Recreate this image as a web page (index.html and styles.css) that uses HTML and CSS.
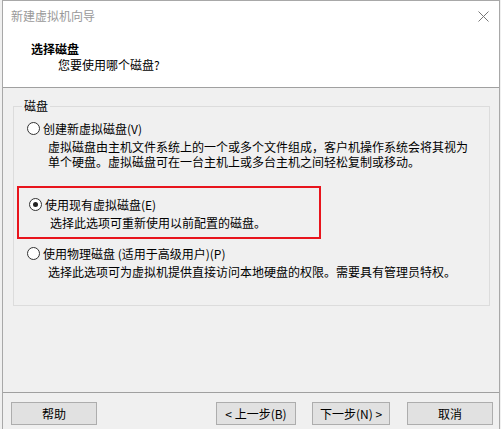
FILE: index.html
```html
<!DOCTYPE html>
<html>
<head>
<meta charset="utf-8">
<link rel="stylesheet" href="styles.css">
</head>
<body>
<div class="window">
  <div class="header">
    <div class="titlebar">
      <span class="title">新建虚拟机向导</span>
      <svg class="close" width="11" height="11" viewBox="0 0 11 11"><path d="M0.5 0.5 L10.5 10.5 M10.5 0.5 L0.5 10.5" stroke="#777" stroke-width="1" fill="none"/></svg>
    </div>
    <div class="head-title">选择磁盘</div>
    <div class="head-sub">您要使用哪个磁盘?</div>
  </div>
  <div class="body">
    <fieldset class="group">
      <legend>磁盘</legend>
      <div class="option opt1">
        <div class="radio-row"><span class="radio"></span><span>创建新虚拟磁盘(V)</span></div>
        <div class="desc">
          <div class="line">虚拟磁盘由主机文件系统上的一个或多个文件组成，客户机操作系统会将其视为</div>
          <div class="line">单个硬盘。虚拟磁盘可在一台主机上或多台主机之间轻松复制或移动。</div>
        </div>
      </div>
      <div class="option opt2">
        <div class="radio-row"><span class="radio checked"></span><span>使用现有虚拟磁盘(E)</span></div>
        <div class="desc"><div class="line">选择此选项可重新使用以前配置的磁盘。</div></div>
      </div>
      <div class="option opt3">
        <div class="radio-row"><span class="radio"></span><span>使用物理磁盘 (适用于高级用户)(P)</span></div>
        <div class="desc"><div class="line">选择此选项可为虚拟机提供直接访问本地硬盘的权限。需要具有管理员特权。</div></div>
      </div>
    </fieldset>
  </div>
  <div class="footer">
    <button class="btn help">帮助</button>
    <div class="spacer"></div>
    <button class="btn prev">&lt; 上一步(B)</button>
    <button class="btn next">下一步(N) &gt;</button>
    <button class="btn cancel">取消</button>
  </div>
</div>
</body>
</html>
```
FILE: styles.css
```css
html, body {
  margin: 0;
  padding: 0;
  background: #f0f0f0;
}
body {
  font-family: "Noto Sans CJK SC", "Microsoft YaHei", sans-serif;
  font-size: 12px;
  color: #000;
}
.window {
  margin-left: 2px;
  width: 498px;
  height: 429px;
  border: 1px solid #a8a8a8;
  border-bottom: none;
  background: #f0f0f0;
  display: flex;
  flex-direction: column;
  box-sizing: border-box;
}
.header {
  background: #fff;
  height: 87px;
  border-bottom: 1px solid #a0a0a0;
  box-sizing: border-box;
  flex: none;
}
.titlebar {
  height: 30px;
  display: flex;
  align-items: center;
  justify-content: space-between;
  padding: 0 10px 0 8px;
}
.title {
  color: #999;
  font-size: 12px;
  line-height: 16px;
}
.head-title {
  font-weight: bold;
  font-size: 12px;
  line-height: 16px;
  margin: 10px 0 0 28px;
}
.head-sub {
  line-height: 16px;
  margin: 0 0 0 55px;
}
.body {
  flex: 1;
  padding: 10px 9px 0 10px;
}
.group {
  margin: 0;
  padding: 5px 10px 0 10px;
  height: 208px;
  box-sizing: border-box;
  border: 1px solid #dcdcdc;
}
.group legend {
  padding: 0 2px;
  margin-left: -2px;
  line-height: 16px;
}
.option {
  padding: 0 0 0 3px;
}
.radio-row {
  display: flex;
  align-items: center;
  gap: 3px;
  height: 18px;
}
.radio {
  width: 11px;
  height: 11px;
  border: 1px solid #333;
  border-radius: 50%;
  background: #fff;
  position: relative;
  flex: none;
}
.radio.checked::after {
  content: "";
  position: absolute;
  left: 3px;
  top: 3px;
  width: 5px;
  height: 5px;
  border-radius: 50%;
  background: #222;
}
.desc {
  margin: 4px 0 0 21px;
}
.line {
  font-family: "Liberation Sans", "Noto Sans CJK SC", sans-serif;
  height: 15px;
  line-height: 15px;
  white-space: nowrap;
}
.opt2 {
  margin: 15px 0 0 -7px;
  padding: 7px 0 0 10px;
  width: 304px;
  height: 53px;
  box-sizing: border-box;
  border: 2px solid #e8141c;
}
.opt3 {
  margin-top: 5px;
}
.footer {
  flex: none;
  height: 37px;
  border-top: 1px solid #a0a0a0;
  display: flex;
  align-items: flex-start;
  padding: 9px 6px 0 8px;
  box-sizing: border-box;
}
.spacer {
  flex: 1;
}
.btn {
  font-family: inherit;
  font-size: 12px;
  height: 23px;
  width: 86px;
  padding: 0;
  background: #e1e1e1;
  border: 1px solid #adadad;
  color: #000;
  line-height: 20px;
  box-sizing: border-box;
}
.btn.prev {
  width: 80px;
}
.btn.next {
  margin-left: 16px;
  width: 78px;
}
.btn.cancel {
  margin-left: 17px;
  width: 86px;
}
```
